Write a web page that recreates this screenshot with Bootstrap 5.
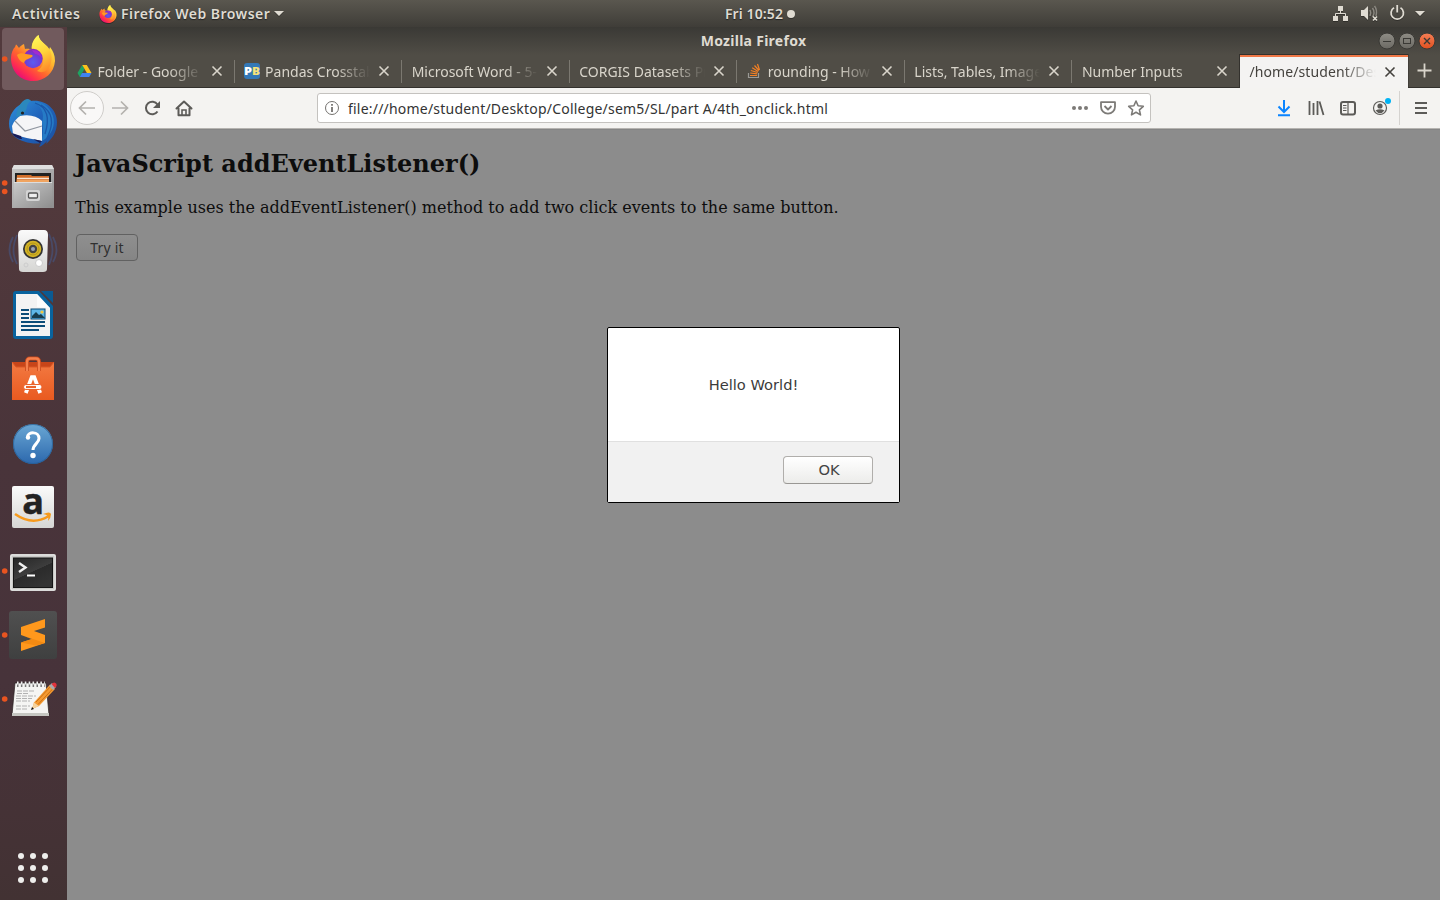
<!DOCTYPE html>
<html lang="en">
<head>
<meta charset="utf-8">
<title>Mozilla Firefox</title>
<meta name="viewport" content="width=device-width, initial-scale=1">
<link href="https://cdn.jsdelivr.net/npm/bootstrap@5.3.0/dist/css/bootstrap.min.css" rel="stylesheet">
<style>
  body { font-family: "Noto Sans", sans-serif; font-size: 14px; line-height: 20px; color: #3b3b3b; }
  svg { display: block; flex: none; }
  .desktop { height: 900px; width: 1440px; }
  .panel { height: 27px; background: linear-gradient(#5a574f, #3f3d38); color: #dfdbd2; font-weight: 600; text-shadow: 0 1px 1px #222; display: grid; grid-template-columns: 1fr auto 1fr; }
  .panel svg { filter: drop-shadow(0 1px 0 rgba(0,0,0,.3)); }
  .t-act { margin-left: 12px; width: 69px; letter-spacing: .6px; }
  .app-icon { margin: 0 4px 0 18px; }
  .app-name { letter-spacing: .47px; }
  .clock { padding-left: 80px; letter-spacing: .12px; }
  .win-title { letter-spacing: .28px; }
  .url { letter-spacing: .209px; padding-top: 1px; }
  .dock { width: 67px; background: linear-gradient(#523a3d 0, #51393c 20%, #49343a 50%, #47333a 75%, #453236 90%, #423233 100%); }
  .titlebar { height: 28px; background: linear-gradient(#3a3935, #504d46); color: #dfdbd2; font-weight: 700; display: grid; grid-template-columns: 1fr auto 1fr; }
  .tabstrip { height: 33px; background: #504d46; border-bottom: 1px solid #33312d; }
  .tab { width: 167.57px; height: 32px; padding-left: 9.5px; color: #d9d5cb; position: relative; }
  .tab + .tab:not(.tab-on)::before { content: ""; position: absolute; left: -1px; top: 5px; height: 23px; width: 1px; background: #7b7870; }
  .tab-label { white-space: nowrap; flex: 1 1 0; min-width: 0; margin-right: 8px; padding-top: 2px; -webkit-mask-image: linear-gradient(to left, transparent 0, #000 34px); mask-image: linear-gradient(to left, transparent 0, #000 34px); }
  .tab-x { margin-right: 12px; }
  .tab-on { height: 33px; background: #f4f3f2; color: #44423e; border-top: 2px solid #f07746; outline: 1px solid #33312d; clip-path: inset(-1px -1px 0 -1px); align-self: flex-start; }
  .tab-on .tab-label { padding-top: 0; letter-spacing: .1px; margin-top: -1px; }
  .tab-on .tab-x { margin-top: -1px; }
  .toolbar { height: 41px; background: #f4f3f1; border-bottom: 1px solid #b5b3b0; }
  .urlbar { width: 834px; height: 30px; background: #fff; border: 1px solid #c4c2bf; border-radius: 3px; margin-left: 123px; color: #333; }
  .viewport { background: #8c8c8c; color: #0d0d0d; font-family: "DejaVu Serif", serif; padding: 20px 8px 0; box-shadow: inset 0 1px 0 #858585; position: relative; }
  .viewport h2 { font-size: 24px; line-height: 29px; font-weight: 700; margin: 0 0 20px; color: #0d0d0d; }
  .viewport p { font-size: 16px; line-height: 19px; margin: 0 0 17px; }
  .try { width: 62px; height: 27px; margin-left: 1px; padding: 0; border: 1px solid #616161; border-radius: 4px; background: linear-gradient(#8f8f8f, #858585); color: #303030; font: 14px/24px "Noto Sans", sans-serif; letter-spacing: .2px; }
  .alertbox { position: absolute; left: 540px; top: 198px; width: 293px; height: 176px; border: 1px solid #000; border-radius: 2px; background: #fff; font-family: "DejaVu Sans", sans-serif; color: #3b3b3b; font-size: 14.67px; }
  .alert-foot { height: 61px; background: #f1f1f1; border-top: 1px solid #e0e0e0; padding-right: 26px; }
  .okb { width: 90px; height: 28px; padding: 0 0 0 2px; border: 1px solid #b0aeab; border-bottom-color: #999794; border-radius: 4px; background: linear-gradient(#fff, #ececea); font: 14.67px/26px "DejaVu Sans", sans-serif; color: #444; margin-bottom: 4px; }
</style>
</head>
<body class="overflow-hidden">
<svg width="0" height="0" class="position-absolute">
  <defs>
    <linearGradient id="fxBody" x1=".85" y1=".1" x2=".2" y2=".95"><stop offset="0" stop-color="#fff44f"/><stop offset=".35" stop-color="#ffb52e"/><stop offset=".6" stop-color="#ff6a2c"/><stop offset=".82" stop-color="#ff2f4f"/><stop offset="1" stop-color="#e60a7a"/></linearGradient>
    <radialGradient id="fxGlobe" cx=".5" cy=".7" r=".65"><stop offset="0" stop-color="#5b5cf0"/><stop offset=".6" stop-color="#6e3ed6"/><stop offset="1" stop-color="#8a2bb8"/></radialGradient>
    <linearGradient id="fxTail" x1=".3" y1="0" x2=".6" y2="1"><stop offset="0" stop-color="#fff85a"/><stop offset=".5" stop-color="#ffd43a"/><stop offset="1" stop-color="#ff8a2a"/></linearGradient>
    <linearGradient id="tbBlue" x1="0" y1="0" x2="1" y2="1"><stop offset="0" stop-color="#2f93dd"/><stop offset=".5" stop-color="#2062ba"/><stop offset="1" stop-color="#1b4f9e"/></linearGradient>
    <linearGradient id="metal" x1="0" y1="0" x2="1" y2="1"><stop offset="0" stop-color="#c9c9c9"/><stop offset="1" stop-color="#8f8f8f"/></linearGradient>
    <linearGradient id="whiteG" x1="0" y1="0" x2="0" y2="1"><stop offset="0" stop-color="#fafafa"/><stop offset="1" stop-color="#d6d6d4"/></linearGradient>
    <linearGradient id="bagG" x1="0" y1="0" x2="0" y2="1"><stop offset="0" stop-color="#f37a42"/><stop offset="1" stop-color="#e95a20"/></linearGradient>
    <linearGradient id="helpG" x1="0" y1="0" x2="0" y2="1"><stop offset="0" stop-color="#6aa7d4"/><stop offset="1" stop-color="#2c68ad"/></linearGradient>
    <linearGradient id="termG" x1="0" y1="0" x2=".6" y2="1"><stop offset="0" stop-color="#262626"/><stop offset=".55" stop-color="#3d3d3d"/><stop offset=".56" stop-color="#2b2b2b"/><stop offset="1" stop-color="#333"/></linearGradient>
    <linearGradient id="subG" x1="0" y1="0" x2="0" y2="1"><stop offset="0" stop-color="#505050"/><stop offset="1" stop-color="#3f4040"/></linearGradient>
    <linearGradient id="btnG" x1="0" y1="0" x2="0" y2="1"><stop offset="0" stop-color="#8f8d86"/><stop offset="1" stop-color="#6b6963"/></linearGradient>
    <linearGradient id="closeG" x1="0" y1="0" x2="0" y2="1"><stop offset="0" stop-color="#f57f56"/><stop offset="1" stop-color="#e0501f"/></linearGradient>
    <symbol id="fox" viewBox="0 0 46 46">
      <path d="M1 23C1 18 3 14 5 12L6 9.500C7 10 8 12 9 13C10 11 12 10 14 9L15 14C18 13.500 20 14 22 15C21 10 23 4 28.500 0C29 4 31 6 35 9.500C37 11 39 13 39 15L40 12C43 16 45 20 45 26C44 38 35 46 23 46C10 46 1 36 1 23Z" fill="url(#fxBody)"/>
      <path d="M22 15C21 9 24 4 28.500 0C29 4 31 6 35 9.500C42 15 43 23 40 31C36 38 31 38 27 36C34 32 35 24 31 18C29 16 26 15 22 15Z" fill="url(#fxTail)"/>
      <circle cx="23" cy="23.500" r="9.700" fill="url(#fxGlobe)"/>
      <path d="M7 20C9 18 13 18 16 19L22 20C24 21 21 23 18 24C15 25 15 26 14 28C11 27 8 24 7 20Z" fill="#ff9a22"/>
      <path d="M22 15C28 15 31 18 32 23C29 20 27 19 25 19C24 18 23 16.500 22 15Z" fill="#a02bd2"/>
    </symbol>
    <symbol id="cross" viewBox="0 0 12 12"><path d="M1.500 1.500L10.500 10.500M10.500 1.500L1.500 10.500" stroke="currentColor" stroke-width="1.600" fill="none"/></symbol>
  </defs>
</svg>

<div class="desktop d-flex flex-column">
  <header class="panel align-items-center">
    <div class="d-flex align-items-center">
      <span class="t-act">Activities</span>
      <svg class="app-icon" width="18" height="18"><use href="#fox"/></svg>
      <span class="app-name">Firefox Web Browser</span>
      <svg width="10" height="6" class="ms-1"><path d="M0 0H10L5 5Z" fill="#dfdbd2"/></svg>
    </div>
    <div class="clock d-flex align-items-center gap-1"><span>Fri 10:52</span><svg width="8" height="8"><circle cx="4" cy="4" r="4" fill="#dfdbd2"/></svg></div>
    <svg class="ms-auto" width="112" height="27" viewBox="1328 0 112 27" fill="#dfdbd2">
      <path d="M1338 6h5v5h-5zM1333 16h5v5h-5zM1343 16h5v5h-5z"/><path d="M1340.500 11v3M1335.500 16.500v-3h10v3" fill="none" stroke="#dfdbd2"/>
      <path d="M1361 10h3l4-4v14l-4-4h-3z"/><path d="M1370 10q1.500 3 0 6M1372.500 8q3 5 0 9M1374.500 6q3 4 1.500 10" fill="none" stroke="#8b8881" stroke-width="1.500"/><path d="M1373 16.500l4 4m0-4l-4 4" stroke="#dfdbd2" stroke-width="1.600"/>
      <path d="M1394 7.700a6.200 6.200 0 1 0 6.500 0M1397.200 5v7.500" fill="none" stroke="#dfdbd2" stroke-width="1.800"/>
      <path d="M1415 11h10l-5 5z"/>
    </svg>
  </header>

  <div class="d-flex flex-grow-1">
    <nav class="dock d-flex flex-column">
      <svg width="67" height="64"><rect x="2" y="1" width="62" height="62" rx="4" fill="#715a5d"/><circle cx="4.700" cy="32" r="2.800" fill="#e95420"/><use href="#fox" x="10" y="8" width="46" height="46"/></svg>
      <svg width="67" height="64">
        <path d="M9 33C9 24 14 17 21 13C26 7 30 8 31 10C45 8 57 18 57 31C57 41 52 48 46 53L47 50C45 52 42 55 39 56L41 52C35 54 20 51 14 45C10 41 9 37 9 33Z" fill="url(#tbBlue)"/>
        <path d="M12 35C14 30 17 27 20 25C29 23 37 25 42 30L42 50C33 48 20 46 13 43Z" fill="#f5f5f7"/>
        <path d="M15 30L25 40L42 35" fill="none" stroke="#8f959f" stroke-width="1.200"/>
        <path d="M12 42L21 45L22 48C19 48 14 46 12 42ZM33 48L42 50L40 52Z" fill="#181c58"/>
        <path d="M16 26C17 15 23 8 28 8L31 10C24 14 30 20 20 25Z" fill="#2b88bd"/>
        <path d="M31 11C41 13 45 22 42 32C44 39 42 46 42 50C51 45 56 35 53 25C49 14 40 10 31 11Z" fill="#267bc6"/>
        <path d="M35 12C47 16 50 27 45 43M41 14C53 21 54 33 47 47" fill="none" stroke="#1b57a9" stroke-width="1.300"/>
        <circle cx="22.500" cy="22" r="1.600" fill="#222"/>
      </svg>
      <svg width="67" height="64">
        <circle cx="4.700" cy="28" r="2.800" fill="#e95420"/><circle cx="4.700" cy="36.500" r="2.800" fill="#e95420"/>
        <path d="M14 10H52L54 14V53H12V14Z" fill="url(#metal)"/><path d="M14 10H52L54 14H12Z" fill="#dfdfdf"/><rect x="15" y="18" width="36" height="9" fill="#222"/>
        <path d="M17 20H31L32 21H49V29H16Z" fill="#d36e2a"/><path d="M17 23.500H49" stroke="#f9e6d3" stroke-width="1.500"/><path d="M17 26H49" stroke="#f0a460" stroke-width="2"/>
        <rect x="14" y="27" width="38" height="25" fill="url(#metal)"/><path d="M14 27.500H52" stroke="#ddd"/><rect x="26" y="35" width="14" height="11" rx="2" fill="#d4d4d4"/><rect x="28.500" y="38" width="9" height="5" rx="1" fill="#eee" stroke="#555" stroke-width="1.300"/>
      </svg>
      <svg width="67" height="64" fill="none">
        <path d="M17 16Q10 32 17 45M13 18Q6 31 13 43M49 15Q56 30 49 46M53 18Q60 31 53 43" stroke="#475076" stroke-width="1.800" opacity=".75"/>
        <path d="M22 11H44Q48 11 48 16L47 50Q47 53 43 53H23Q19 53 19 50L18 16Q18 11 22 11Z" fill="url(#whiteG)"/>
        <circle cx="33" cy="30" r="10" fill="#333"/><circle cx="33" cy="30" r="8.300" fill="#d3b325"/><circle cx="33" cy="30" r="6" stroke="#b39618"/><circle cx="33" cy="30" r="4.200" fill="#444"/><circle cx="33" cy="30" r="2" fill="#99a3b4"/>
        <circle cx="39" cy="44" r="3.500" fill="#fff" stroke="#ccc"/><circle cx="26" cy="46" r="2" stroke="#ccc"/>
      </svg>
      <svg width="67" height="64">
        <path d="M16 8H39L53 23V53Q53 56 50 56H16Q13 56 13 53V11Q13 8 16 8Z" fill="#09639e"/><path d="M41 8H53V20Z" fill="#0b5a92"/>
        <path d="M16 11H37L50 25V53H16Z" fill="#f3f3f3"/><path d="M37 11V24L50 25Z" fill="#fff" opacity=".7"/>
        <path d="M21 27h8M21 31h8M21 35h8M21 39h24M21 43h24M21 47h18" stroke="#0b4c78" stroke-width="2"/>
        <rect x="31" y="26" width="14" height="10" fill="#5eb6e7" stroke="#0b4c78"/><path d="M32 35V33l4-4 3 3 2-1 4 4Z" fill="#173c4d"/><circle cx="42" cy="29" r="1.600" fill="#f3c63d"/>
      </svg>
      <svg width="67" height="64">
        <path d="M12 15H54V53H12Z" fill="#c84519"/><path d="M12 15L16 20H50L54 15V53H12Z" fill="url(#bagG)"/><path d="M12 15L16 20H50L54 15" fill="none" stroke="#d95927"/>
        <path d="M27 24V15Q27 11.500 30 11.500H36Q39 11.500 39 15V24" fill="none" stroke="#c9481b" stroke-width="4"/><path d="M27 24V15Q27 11.500 30 11.500H36Q39 11.500 39 15V24" fill="none" stroke="#f5804d" stroke-width="2.400"/>
        <path d="M25.800 46L31.800 30.200H34.200L40.200 46" fill="none" stroke="#fff" stroke-width="3.800"/><rect x="23.500" y="37.500" width="18.500" height="5" rx="2.500" fill="#fff" stroke="#ea632c"/><path d="M26 40h10" stroke="#ea632c" stroke-width="2.200"/>
      </svg>
      <svg width="67" height="64"><circle cx="33" cy="33" r="20" fill="url(#helpG)"/><circle cx="33" cy="33" r="19.500" fill="none" stroke="#245d91" opacity=".7"/><path d="M27.500 26C28 20.500 39 20 39 27.500C39 32 33 33.500 33 39" fill="none" stroke="#fff" stroke-width="3"/><circle cx="28" cy="26.500" r="2.200" fill="#fff"/><circle cx="33" cy="44.500" r="2.700" fill="#fff"/></svg>
      <svg width="67" height="64"><rect x="12" y="11" width="42" height="42" rx="2" fill="url(#whiteG)"/><text x="33" y="38.500" text-anchor="middle" font-family="Open Sans, sans-serif" font-weight="700" font-size="36" fill="#222" stroke="#222" stroke-width=".5">a</text><path d="M15 39Q32 51 48 41.500" fill="none" stroke="#f79a1c" stroke-width="2.500"/><path d="M43 39Q50 36 51 39Q51 43 48 46Q50 40 43 39Z" fill="#f79a1c"/></svg>
      <svg width="67" height="64"><circle cx="4.700" cy="32" r="2.800" fill="#e95420"/><rect x="10" y="15" width="46" height="37" rx="2" fill="#c9c9c6"/><rect x="11" y="16" width="44" height="35" rx="1" fill="none" stroke="#eee"/><rect x="13.500" y="19" width="39" height="29.500" fill="url(#termG)" stroke="#151515"/><path d="M19 24L25.500 28.500L19 33" fill="none" stroke="#f0f0f0" stroke-width="2.400"/><path d="M27 36.500h8" stroke="#fff" stroke-width="2"/></svg>
      <svg width="67" height="64"><circle cx="4.700" cy="32" r="2.800" fill="#e95420"/><rect x="9" y="8" width="48" height="48" rx="3" fill="url(#subG)"/><path d="M21 24L45 16V24.500L34 28L45 32V40L21 48V39.500L32 36L21 32Z" fill="#ff981c"/><path d="M24 33L45 40L36 42.500L21 39.500L32 36Z" fill="#f28a12"/></svg>
      <svg width="67" height="64"><circle cx="4.700" cy="32" r="2.800" fill="#e95420"/><path d="M15 16H46L49 48H12Z" fill="#f5f5f3" stroke="#272020" stroke-width=".7"/><path d="M12 46H49V49H12Z" fill="#c6c7c2"/><path d="M17 17.500h28" stroke="#777" stroke-width="5" stroke-dasharray="1.500 2.400"/><path d="M17 16h28" stroke="#eee" stroke-width="3" stroke-dasharray="1.500 2.400"/><path d="M17 24h17M17 26.500h12M16 29h20M16 31.500h16M16 34h14M16 39h14M16 42h12" stroke="#aaa" stroke-width=".9" stroke-dasharray="5 1"/><path d="M32 42L34 35.500L50 17.500L55 22L39 39Z" fill="#f49a31"/><path d="M36 35L52 18M38 37.500L54 20.500" stroke="#c66b12" stroke-width=".9"/><path d="M32 42l2-6.500 5 3.500z" fill="#f4d39e"/><path d="M31 43l1-3 2 2z" fill="#111"/><path d="M49 19l3-3 4 4-3 3z" fill="#aaa"/><path d="M51.500 17q3-3 5 0 1 2-1.500 4z" fill="#e3333b"/></svg>
      <svg class="mt-auto" width="67" height="64" fill="#eeeeec"><g id="dots"><circle cx="21" cy="20" r="3"/><circle cx="33" cy="20" r="3"/><circle cx="45" cy="20" r="3"/></g><use href="#dots" y="12"/><use href="#dots" y="24"/></svg>
    </nav>

    <main class="d-flex flex-column flex-grow-1">
      <div class="titlebar align-items-center">
        <span></span><span class="win-title">Mozilla Firefox</span>
        <svg class="ms-auto" width="64" height="28" viewBox="1376 27 64 28" stroke="#3a3935" fill="none">
          <circle cx="1387" cy="41" r="8" fill="url(#btnG)"/><path d="M1383 41.500h8"/>
          <circle cx="1407" cy="41" r="8" fill="url(#btnG)"/><rect x="1403.500" y="38.500" width="7" height="5"/>
          <circle cx="1427" cy="41" r="8" fill="url(#closeG)"/><path d="M1424 38l6 6m0-6l-6 6" stroke-width="1.400"/>
        </svg>
      </div>

      <div class="tabstrip d-flex align-items-center">
        <div class="tab d-flex align-items-center"><svg width="15" height="14" style="margin-right:6px" viewBox="0 0 14 14"><path d="M4.700 1L0 9L2.300 13L7 5Z" fill="#1da462"/><path d="M4.700 1H9.300L14 9H9.400Z" fill="#fdc21c"/><path d="M4.500 9H14L11.700 13H2.300Z" fill="#3f83f0"/></svg><span class="tab-label">Folder - Google D</span><svg class="tab-x" width="12" height="12"><use href="#cross"/></svg></div>
        <div class="tab d-flex align-items-center"><svg width="16" height="16" style="margin-right:5px"><rect width="16" height="16" rx="3" fill="#3378b7"/><text x="0" y="12" font-family="Open Sans,sans-serif" font-weight="800" font-size="11" textLength="8" lengthAdjust="spacingAndGlyphs" fill="#fff">P</text><text x="8" y="12" font-family="Open Sans,sans-serif" font-weight="800" font-size="11" textLength="8" lengthAdjust="spacingAndGlyphs" fill="#f6e27a">B</text></svg><span class="tab-label">Pandas Crosstab</span><svg class="tab-x" width="12" height="12"><use href="#cross"/></svg></div>
        <div class="tab d-flex align-items-center"><span class="tab-label">Microsoft Word - 5-</span><svg class="tab-x" width="12" height="12"><use href="#cross"/></svg></div>
        <div class="tab d-flex align-items-center"><span class="tab-label">CORGIS Datasets Pr</span><svg class="tab-x" width="12" height="12"><use href="#cross"/></svg></div>
        <div class="tab d-flex align-items-center"><svg width="16" height="16" style="margin-right:5px" fill="none"><path d="M1.500 10v4.500h10V10" stroke="#9b9a96" stroke-width="1.200"/><path d="M3 12.500h7M3.200 10l7 .8M3.800 7.500l6.800 2M5.200 4.700l6 3.700M7.500 2.500l4.500 5M10.500 1l2 6" stroke="#f48024" stroke-width="1.200"/></svg><span class="tab-label">rounding - How t</span><svg class="tab-x" width="12" height="12"><use href="#cross"/></svg></div>
        <div class="tab d-flex align-items-center"><span class="tab-label">Lists, Tables, Image</span><svg class="tab-x" width="12" height="12"><use href="#cross"/></svg></div>
        <div class="tab d-flex align-items-center"><span class="tab-label">Number Inputs</span><svg class="tab-x" width="12" height="12"><use href="#cross"/></svg></div>
        <div class="tab tab-on d-flex align-items-center"><span class="tab-label">/home/student/Des</span><svg class="tab-x" width="12" height="12"><use href="#cross"/></svg></div>
        <svg width="32" height="32" stroke="#d9d5cb" stroke-width="1.800"><path d="M9.500 15.500h14M16.500 8.500v14"/></svg>
      </div>

      <div class="toolbar d-flex align-items-center">
        <svg width="127" height="40" viewBox="67 88 127 40" fill="none" stroke="#5c5b58" stroke-width="2">
          <circle cx="87" cy="108" r="16.500" fill="#f9f8f7" stroke="#cfcdca" stroke-width="1"/>
          <path d="M95 108H80M86 101.500L79.500 108L86 114.500" stroke="#b3b1ae" stroke-width="1.700"/>
          <path d="M112 108H127M121 101.500L127.500 108L121 114.500" stroke="#b3b1ae" stroke-width="1.700"/>
          <path d="M157.500 104.500A6.300 6.300 0 1 0 157.500 111.500"/><path d="M160 101v7h-7z" fill="#5c5b58" stroke="none"/>
          <path d="M176.500 108.500L184 101.500L191.500 108.500M178.500 108v7.200h11V108" stroke-linejoin="round" stroke-linecap="round"/><path d="M182 115v-5h4v5" stroke-width="1.600"/>
        </svg>
        <div class="urlbar d-flex align-items-center">
          <svg width="30" height="28" fill="none" stroke="#74726f"><circle cx="14" cy="14" r="6.500"/><path d="M14 13v5M14 10v1.700" stroke-width="1.800"/></svg>
          <span class="url">file:///home/student/Desktop/College/sem5/SL/part A/4th_onclick.html</span>
          <svg class="ms-auto" width="82" height="28" viewBox="1068 94 82 28" fill="none" stroke="#7c7a77" stroke-width="1.800">
            <g fill="#7c7a77" stroke="none"><circle cx="1074" cy="108" r="2"/><circle cx="1080" cy="108" r="2"/><circle cx="1086" cy="108" r="2"/></g>
            <path d="M1101 102.200h14v4.500a7 7 0 0 1-14 0zM1104.500 106l3.500 3.500 3.500-3.500" stroke-linejoin="round"/>
            <path d="M1136 101l2.100 4.800 5.200.5-3.900 3.500 1.100 5.100-4.500-2.700-4.500 2.700 1.100-5.100-3.900-3.500 5.200-.5z" stroke-linejoin="round" stroke-width="1.600"/>
          </svg>
        </div>
        <svg class="ms-auto" width="174" height="40" viewBox="1266 88 174 40" fill="none" stroke="#5c5b58" stroke-width="2">
          <path d="M1284 100v11.500M1278.500 106.500l5.500 5.500 5.500-5.500M1278 115.200h12" stroke="#0a84ff"/>
          <path d="M1309.500 101v14M1313.500 103v12M1317.500 101v14M1319.500 101.500l4 13.500" stroke-width="1.800"/>
          <rect x="1341" y="102" width="14" height="12.500" rx="2"/><path d="M1348 102v13" stroke-width="1.200"/><path d="M1343 105.500h3.500M1343 108h3.500M1343 110.500h3.500" stroke-width="1"/>
          <circle cx="1380" cy="108" r="6.500" stroke-width="1.200"/><circle cx="1380" cy="106" r="2.600" fill="#5c5b58" stroke="none"/><path d="M1375.500 110.500Q1380 107.800 1384.500 110.500Q1380 116 1375.500 110.500Z" fill="#5c5b58" stroke="none"/><circle cx="1388" cy="101" r="3" fill="#00b3f4" stroke="none"/>
          <path d="M1399.500 91v34" stroke="#d5d3d0" stroke-width="1"/><path d="M1415 103h12M1415 108h12M1415 113h12"/>
        </svg>
      </div>

      <section class="viewport flex-grow-1">
        <h2>JavaScript addEventListener()</h2>
        <p>This example uses the addEventListener() method to add two click events to the same button.</p>
        <button class="try d-block">Try it</button>
        <div class="alertbox d-flex flex-column">
          <div class="flex-grow-1 d-flex align-items-center justify-content-center">Hello World!</div>
          <div class="alert-foot d-flex align-items-center justify-content-end"><button class="okb">OK</button></div>
        </div>
      </section>
    </main>
  </div>
</div>
</body>
</html>
